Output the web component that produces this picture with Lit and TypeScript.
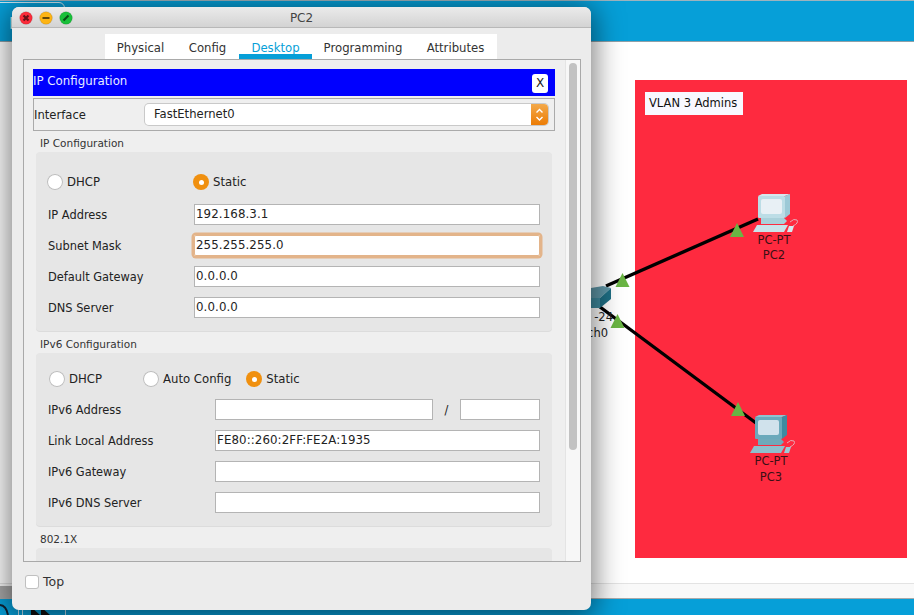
import { LitElement, html, css, svg } from "lit";
import { customElement } from "lit/decorators.js";

interface PcTheme { top: string; side: string; frame: string; screen: string; stand: string; board: string; mouse: string; }

const pale: PcTheme = { top: "#d5e8ee", side: "#9cc9d6", frame: "#bcdde6", screen: "#e8f0f5", stand: "#a9d0da", board: "#c9e3ea", mouse: "#d5e8ee" };
const dark: PcTheme = { top: "#8fc3cf", side: "#3f8aa0", frame: "#6aa9bb", screen: "#d0e2ec", stand: "#6fa9ba", board: "#8fbfcc", mouse: "#9cc9d6" };

const pc = (x: number, y: number, t: PcTheme) => svg`
  <g transform="translate(${x} ${y})">
    <path d="M0 2 L4 0 H32 L27 2 Z" fill="${t.top}"/>
    <path d="M27 2 L32 0 V20 L27 24 Z" fill="${t.side}"/>
    <rect x="0" y="2" width="27" height="22" rx="1" fill="${t.frame}"/>
    <rect x="3" y="5" width="21" height="15" rx="2" fill="${t.screen}"/>
    <path d="M3 24 H26 L29 27 L26 30 H3 Z" fill="${t.stand}"/>
    <path d="M-1 31 H30 L26 38 H-5 Z" fill="${t.board}"/>
    <path d="M31 32 H36 L34 38 H29 Z" fill="${t.mouse}"/>
    <path d="M32 28 Q36 24 39 26 Q41 29 35 32" fill="none" stroke="#e6a9b4" stroke-width="1"/>
  </g>`;

const tri = (x: number, y: number) => svg`<path d="M${x} ${y - 7} L${x + 7} ${y + 7} H${x - 7} Z" fill="#6ab544"/>`;

@customElement("app-root")
export class AppRoot extends LitElement {
  static styles = css`
    :host { display: block; width: 914px; height: 615px; position: relative; overflow: hidden; background: #fff;
      font-family: "DejaVu Sans", sans-serif; color: #222; }
    .topbar { height: 42px; background: #069fd8; border-top: 1px solid #9db3bd; border-bottom: 1px solid #8fa0a8; box-sizing: border-box; position: relative; overflow: hidden; }
    .apptab { position: absolute; left: -20px; top: 1px; width: 85px; height: 60px; border: 1px solid #cfe8f3; border-radius: 6px; box-sizing: border-box; }
    .apptabtext { position: absolute; left: 28px; top: 11px; color: #e6f5fb; font-size: 16px; }
    .stage { height: 542px; position: relative; background: #fff; border-bottom: 1px solid #e3e3e3; box-sizing: border-box; }
    .stage svg { position: absolute; left: 0; top: 0; }
    .vlan { position: absolute; left: 635px; top: 38px; width: 272px; height: 478px; background: #fe2a3f; }
    .vlanlabel { position: absolute; left: 10px; top: 12px; width: 98px; height: 23px; background: #f8f8ff; color: #111; font-size: 11.5px; line-height: 23px; padding-left: 4px; box-sizing: border-box; white-space: nowrap; }
    .node { position: absolute; font-size: 11.5px; text-align: center; width: 70px; color: #3a1015; }
    .n2 { left: 739px; top: 191px; line-height: 15px; }
    .n3 { left: 736px; top: 411px; line-height: 16px; }
    .sw { position: absolute; left: 573px; top: 268px; width: 40px; font-size: 11.5px; line-height: 15px; color: #222; text-align: right; white-space: nowrap; }
    .sw2 { padding-right: 5px; margin-top: 1px; }
    .status { height: 15px; background: #f9f9f9; border-bottom: 1px solid #aaa; box-sizing: border-box; position: relative; }
    .statusleft { position: absolute; left: 0; top: 2px; width: 12px; height: 12px; background: #a9a9a9; }
    .bottombar { height: 16px; background: #069fd8; position: relative; }
    .bottombar svg { position: absolute; left: 0; top: 0; }

    .win { position: absolute; left: 12px; top: 7px; width: 579px; height: 603px; background: #ececec; border-radius: 7px;
      box-shadow: 0 4px 28px 4px rgba(0,0,0,.5); display: flex; flex-direction: column; overflow: hidden; }
    .title { height: 21px; flex: none; background: linear-gradient(#ebebeb, #d3d3d3); border-bottom: 1px solid #b8b8b8; padding-top: 1px; box-sizing: border-box;
      display: flex; align-items: center; justify-content: center; position: relative; font-size: 12px; color: #444; }
    .lights { position: absolute; left: 7px; top: 4px; display: flex; gap: 6px; }
    .lights svg { display: block; }
    .tabs { margin: 6px 0 0 93px; width: 392px; height: 25px; background: #fff; display: flex; flex: none; font-size: 11.7px; color: #333; }
    .tab { display: flex; align-items: center; justify-content: center; box-sizing: border-box; padding-top: 2px; white-space: nowrap; }
    .tab.on { color: #069fd8; border-bottom: 5px solid #069fd8; padding-top: 7px; }
    .panel { margin-left: 11px; width: 558px; height: 503px; flex: none; box-sizing: border-box; border: 1px solid #a9a9a9; display: flex; background: #efefef; overflow: hidden; }
    .content { width: 541px; flex: none; padding: 9px 0 0 9px; box-sizing: border-box; }
    .scroll { width: 15px; flex: none; background: #f7f7f7; border-left: 1px solid #e4e4e4; box-sizing: border-box; padding: 3px 3px 0 3px; }
    .thumb { width: 8px; height: 387px; background: #c2c2c2; border-radius: 4px; }
    .ipbar { width: 522px; height: 27px; background: #0000ff; color: #e8eeff; font-size: 11.8px; display: flex; align-items: center; justify-content: space-between; padding: 0 7px 4px 0; box-sizing: border-box; margin-bottom: 2px; }
    .x { width: 16px; height: 19px; background: #fff; color: #222; border-radius: 3px; text-align: center; line-height: 19px; font-size: 12px; margin-top: 5px; }
    .iface { width: 522px; height: 33px; border: 1px solid #aaa; box-sizing: border-box; display: flex; align-items: center; padding: 0 6px 0 0; font-size: 11.6px; }
    .iface .lbl { width: 111px; flex: none; padding-top: 1px; }
    .select { width: 403px; height: 21px; background: #fff; border-radius: 4px; box-shadow: 0 0 0 1px #c9c9c9; display: flex; align-items: center; justify-content: space-between; padding-left: 9px; box-sizing: border-box; padding-bottom: 1px; }
    .stepper { width: 17px; height: 21px; background: linear-gradient(#f3a94a, #ec7c05); border-radius: 0 4px 4px 0; display: block; margin-bottom: -1px; }
    .gt { height: 21px; margin-left: 7px; font-size: 10.5px; line-height: 24px; color: #333; }
    .gt.g2 { height: 22px; line-height: 26px; }
    .group { margin-left: 3px; width: 516px; background: #e6e6e6; border-radius: 4px; box-sizing: border-box; padding: 20px 12px 13px; box-shadow: 0 1px 0 #dcdcdc; font-size: 11.4px; }
    .g1 { height: 179px; }
    .g2b { height: 173px; padding-top: 16px; }
    .g3 { height: 60px; }
    .radios { display: flex; align-items: center; height: 20px; margin-bottom: 12px; font-size: 11.7px; }
    .g2b .radios { margin-bottom: 10px; padding-left: 1px; }
    .r { display: flex; align-items: center; gap: 4px; white-space: nowrap; }
    .g1 .radios .r:first-child { margin-left: -1px; }
    .dot { width: 16px; height: 16px; border-radius: 50%; background: #fff; box-shadow: inset 0 0 0 1px #bdbdbd; display: block; flex: none; }
    .dot.on { background: #f0900f; box-shadow: none; position: relative; }
    .dot.on::after { content: ""; position: absolute; left: 5.5px; top: 5.5px; width: 5px; height: 5px; border-radius: 50%; background: #fff; }
    .f-ml { margin-left: 93px; }
    .f-ml2 { margin-left: 41px; }
    .f-ml3 { margin-left: 15px; }
    .row { display: flex; align-items: center; height: 21px; margin-bottom: 10px; }
    .row:last-child { margin-bottom: 0; }
    .row .lbl { flex: none; width: 146px; }
    .g2b .row .lbl { width: 167px; }
    .inp { flex: 1; height: 21px; background: #fff; box-shadow: inset 0 0 0 1px #b4b4b4; box-sizing: border-box; padding: 0 2px; line-height: 21px; font-size: 11.8px; color: #222; letter-spacing: .1px; white-space: nowrap; }
    .inp.focus { box-shadow: inset 0 0 0 1px #e3b48a, 0 0 0 2.5px #e3b48a; border-radius: 2px; }
    .inp.a { flex: none; width: 218px; }
    .inp.b { flex: none; width: 80px; }
    .slash { width: 27px; text-align: center; flex: none; }
    .foot { display: flex; align-items: center; gap: 4px; font-size: 12.5px; margin: 12px 0 0 13px; color: #333; }
    .cb { width: 14px; height: 14px; background: #fff; border-radius: 3px; box-shadow: inset 0 0 0 1px #c0c0c0; }
  `;

  private light(c: string, d: string) {
    return html`<svg width="14" height="14" viewBox="0 0 14 14"><circle cx="7" cy="7" r="6.3" fill="${c}" stroke="rgba(0,0,0,.12)"/><path d="${d}" stroke="rgba(0,0,0,.6)" stroke-width="2.2" fill="none"/></svg>`;
  }

  private row(label: string, value = "", focus = false) {
    return html`<div class="row"><span class="lbl">${label}</span><div class="inp ${focus ? "focus" : ""}">${value}</div></div>`;
  }

  render() {
    return html`
      <div class="topbar"><div class="apptab"><span class="apptabtext">P</span></div></div>
      <div class="stage">
        <div class="vlan"><div class="vlanlabel">VLAN 3 Admins</div></div>
        <svg width="914" height="541" viewBox="0 42 914 541">
          <path d="M606 286 L758 219" stroke="#000" stroke-width="3.4" fill="none"/>
          <path d="M596 304 L756 423" stroke="#000" stroke-width="3.4" fill="none"/>
          <path d="M591 288 L603 286 L611 288 L600 298 L591 298 Z" fill="#5f97a8"/>
          <path d="M611 288 V299 L600 308 V298 Z" fill="#1e6f85"/>
          <path d="M591 298 H600 V308 H591 Z" fill="#3f8b9f"/>
          ${pc(758, 194, pale)} ${pc(755, 415, dark)}
          ${tri(737, 230)} ${tri(622.5, 280)} ${tri(617.5, 321)} ${tri(738, 409)}
        </svg>
        <div class="node n2">PC-PT<br />PC2</div>
        <div class="node n3">PC-PT<br />PC3</div>
        <div class="sw"><div>-24</div><div class="sw2">ch0</div></div>
      </div>
      <div class="status"><div class="statusleft"></div></div>
      <div class="bottombar">
        <svg width="90" height="16" viewBox="0 0 90 16">
          <path d="M-2 6 Q6 5 8 16" fill="none" stroke="#123" stroke-width="2"/>
          <path d="M18.5 0 V16 M22.5 0 V16 M65.5 0 V16" stroke="#bfe3f1" stroke-width="1"/>
          <path d="M31 8 L40 16 H31 Z M41 8 L50 16 H41 Z" fill="#111"/>
        </svg>
      </div>

      <div class="win">
        <div class="title">
          <div class="lights">
            ${this.light("#fb2c3a", "M4.5 4.5 L9.5 9.5 M9.5 4.5 L4.5 9.5")}
            ${this.light("#fdb414", "M3.5 7 H10.5")}
            ${this.light("#19c03a", "M4.5 9.5 L9.5 4.5")}
          </div>
          PC2
        </div>
        <div class="tabs">
          <div class="tab" style="width:71px">Physical</div>
          <div class="tab" style="width:63px">Config</div>
          <div class="tab on" style="width:73px">Desktop</div>
          <div class="tab" style="width:102px">Programming</div>
          <div class="tab" style="width:83px">Attributes</div>
        </div>
        <div class="panel">
          <div class="content">
            <div class="ipbar"><span>IP Configuration</span><span class="x">X</span></div>
            <div class="iface"><span class="lbl">Interface</span>
              <div class="select">FastEthernet0
                <svg class="stepper" viewBox="0 0 17 21"><path d="M5.5 8.5 L8.5 5.5 L11.5 8.5 M5.5 13 L8.5 16 L11.5 13" fill="none" stroke="#fff" stroke-width="1.4"/></svg>
              </div>
            </div>
            <div class="gt">IP Configuration</div>
            <div class="group g1">
              <div class="radios">
                <label class="r"><span class="dot"></span>DHCP</label>
                <label class="r f-ml"><span class="dot on"></span>Static</label>
              </div>
              ${this.row("IP Address", "192.168.3.1")}
              ${this.row("Subnet Mask", "255.255.255.0", true)}
              ${this.row("Default Gateway", "0.0.0.0")}
              ${this.row("DNS Server", "0.0.0.0")}
            </div>
            <div class="gt g2">IPv6 Configuration</div>
            <div class="group g2b">
              <div class="radios">
                <label class="r"><span class="dot"></span>DHCP</label>
                <label class="r f-ml2"><span class="dot"></span>Auto Config</label>
                <label class="r f-ml3"><span class="dot on"></span>Static</label>
              </div>
              <div class="row"><span class="lbl">IPv6 Address</span><div class="inp a"></div><span class="slash">/</span><div class="inp b"></div></div>
              ${this.row("Link Local Address", "FE80::260:2FF:FE2A:1935")}
              ${this.row("IPv6 Gateway")}
              ${this.row("IPv6 DNS Server")}
            </div>
            <div class="gt g2">802.1X</div>
            <div class="group g3"></div>
          </div>
          <div class="scroll"><div class="thumb"></div></div>
        </div>
        <div class="foot"><div class="cb"></div>Top</div>
      </div>
    `;
  }
}
